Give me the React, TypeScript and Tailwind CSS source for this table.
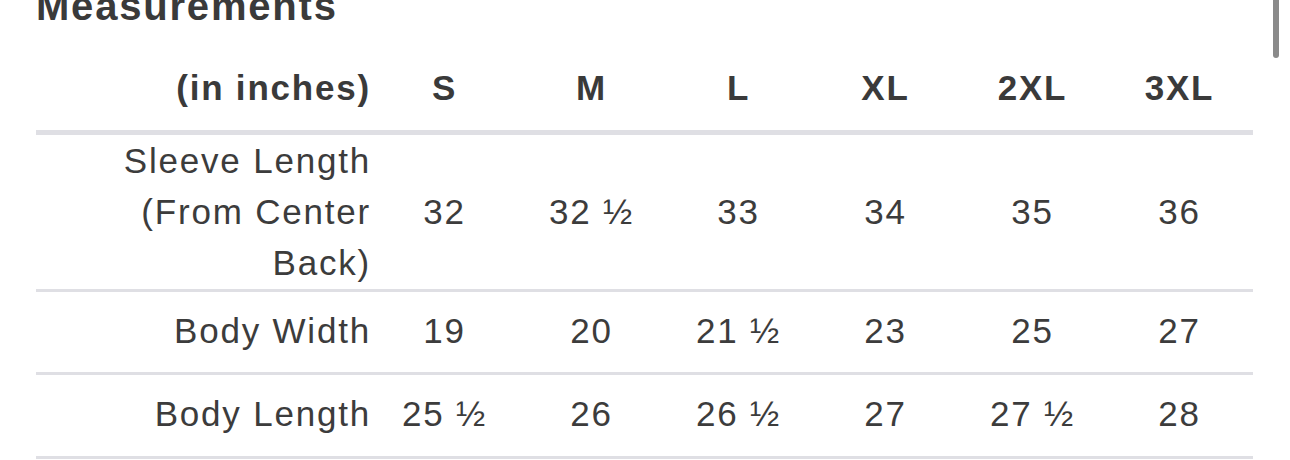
import React from "react";

const sizes = ["S", "M", "L", "XL", "2XL", "3XL"];

const rows: { label: React.ReactNode; values: string[]; h: string }[] = [
  {
    label: (
      <>
        Sleeve Length
        <br />
        (From Center
        <br />
        Back)
      </>
    ),
    values: ["32", "32 ½", "33", "34", "35", "36"],
    h: "h-[154px]",
  },
  { label: "Body Width", values: ["19", "20", "21 ½", "23", "25", "27"], h: "h-[80px]" },
  { label: "Body Length", values: ["25 ½", "26", "26 ½", "27", "27 ½", "28"], h: "h-[81px]" },
];

export default function App() {
  return (
    <div
      className="relative w-[1290px] h-[460px] overflow-hidden bg-white text-[#3c3c3c]"
      style={{ fontFamily: '"Liberation Sans", Arial, sans-serif' }}
    >
      <div className="absolute right-[11px] top-[-6px] w-[6px] h-[64px] rounded-full bg-[#8a8a8a]" />
      <div className="pl-[36px] w-[1253px] flex flex-col">
        <div className="h-[46px] flex flex-col">
          <div className="-mt-[14px] text-[40px] leading-[40px] font-bold tracking-[1.8px] text-[#3a3a3a]">
            Measurements
          </div>
        </div>
        <div className="grid grid-cols-[335px_repeat(6,1fr)] h-[84px] pb-[2px] items-center text-[35px] leading-[35px] font-bold tracking-[1.8px] text-[#3a3a3a]">
          <div className="text-right">(in inches)</div>
          {sizes.map((s) => (
            <div key={s} className="text-center">
              {s}
            </div>
          ))}
        </div>
        <div className="h-[5px] bg-[#dfdfe4]" />
        {rows.map((r, i) => (
          <React.Fragment key={i}>
            <div
              className={`grid grid-cols-[335px_repeat(6,1fr)] ${r.h} pb-[4px] items-center text-[35px] leading-[51px] tracking-[1.8px]`}
            >
              <div className="text-right">{r.label}</div>
              {r.values.map((v, j) => (
                <div key={j} className="text-center">
                  {v}
                </div>
              ))}
            </div>
            <div className="h-[3px] bg-[#dfdfe4]" />
          </React.Fragment>
        ))}
      </div>
    </div>
  );
}
